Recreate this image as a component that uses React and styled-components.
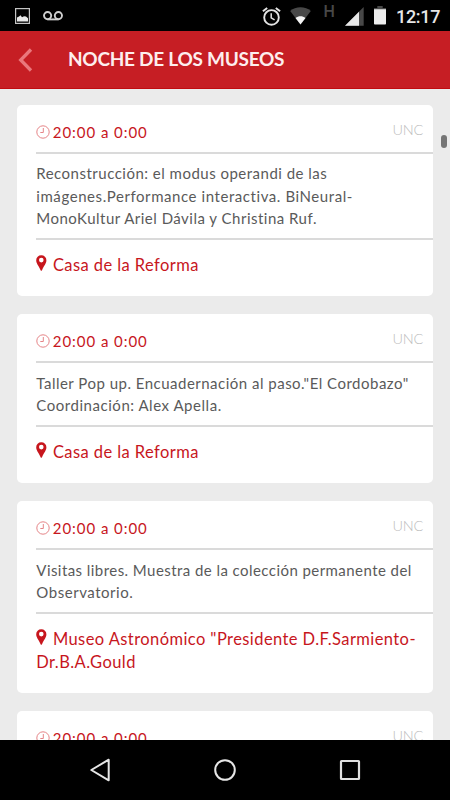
import React from "react";
import styled, {createGlobalStyle} from "styled-components";

const GlobalStyle = createGlobalStyle`
  * {
    box-sizing: border-box;
  }

  body {
    margin: 0;
    background-color: #000000;
  }
`;

const Screen = styled.div`
  width: 450px;
  height: 800px;
  display: flex;
  flex-direction: column;
  overflow: hidden;
  background-color: #ebebeb;
  font-family: Lato, "Liberation Sans", sans-serif;
`;

const StatusBar = styled.div`
  height: 31px;
  flex: none;
  display: flex;
  align-items: flex-start;
  justify-content: space-between;
  padding: 0 10px 0 15px;
  background-color: #000000;

  svg {
    display: block;
  }
`;

const StatusGroup = styled.div`
  display: flex;
  align-items: flex-start;
`;

const StatusItem = styled.div`
  margin-left: ${props => props.$left || 0}px;
  padding-top: ${props => props.$top || 0}px;
`;

const Network = styled.span`
  display: block;
  width: 11px;
  margin: 2px 0 0 13px;
  color: #484848;
  font: 500 16px/20px Roboto, sans-serif;
`;

const Clock = styled.span`
  display: block;
  width: 44px;
  margin: 6px 0 0 10px;
  color: #e6e6e6;
  font: 500 18px/22px Roboto, sans-serif;
  letter-spacing: -0.3px;
  white-space: nowrap;
`;

const Header = styled.header`
  height: 58px;
  flex: none;
  display: flex;
  align-items: center;
  padding: 0 18px 0 18px;
  background-color: #c61e24;
  border-bottom: 1px solid #c00c10;
`;

const Title = styled.h1`
  margin: -1px 0 0 34px;
  color: #fdeeee;
  font-size: 19px;
  font-weight: 700;
  line-height: 24px;
  letter-spacing: -0.27px;
  white-space: nowrap;
`;

const List = styled.main`
  position: relative;
  flex: 1;
  min-height: 0;
  overflow: hidden;
  display: flex;
  flex-direction: column;
  gap: 17.7px;
  padding: 15.6px 17px 0 17.3px;
`;

const ScrollThumb = styled.div`
  position: absolute;
  top: 46px;
  right: 3px;
  width: 6px;
  height: 13px;
  border-radius: 3px;
  background-color: #757575;
`;

const Card = styled.article`
  flex: none;
  padding-left: 19px;
  background-color: #ffffff;
  border-radius: 5px;
`;

const CardHead = styled.div`
  height: 49.1px;
  display: flex;
  justify-content: space-between;
  padding-right: 10px;
  border-bottom: 2px solid #dadada;
`;

const Schedule = styled.div`
  display: flex;
  align-items: flex-start;
  padding-top: 17px;
  color: #c7161d;
  font-size: 15px;
  line-height: 20px;
  letter-spacing: 0.95px;

  svg {
    margin: 3px 3px 0 -0.5px;
  }
`;

const Owner = styled.span`
  padding-top: 15px;
  color: #bcbcbc;
  font-size: 14.5px;
  font-weight: 300;
  line-height: 20px;
  letter-spacing: -0.3px;
`;

const Description = styled.p`
  margin: 0;
  padding: 8.8px 0 8.5px;
  border-bottom: 2px solid #dadada;
  color: #5a5a5a;
  font-size: 15px;
  line-height: 22.4px;
`;

const Line = styled.span`
  display: block;
  letter-spacing: ${props => props.$spacing || 0.5}px;
  white-space: nowrap;
`;

const Place = styled.div`
  padding: 14px 0 18.6px;
  color: #c7161d;
  font-size: 16.5px;
  line-height: 23.4px;
  letter-spacing: 0.42px;
  white-space: pre-line;

  svg {
    margin-right: 5.6px;
    vertical-align: 0;
  }
`;

const NavBar = styled.nav`
  height: 60px;
  flex: none;
  display: flex;
  align-items: center;
  justify-content: space-between;
  padding: 0 88px;
  background-color: #000000;
`;

const PictureIcon = () => (
    <svg width="15" height="16" viewBox="0 0 15 16">
        <rect x="0.6" y="0.6" width="13.8" height="14.8" fill="none" stroke="#c4c4c4" strokeWidth="1.2"/>
        <path d="M2 13.5V9.5l2-1 1.5-1.2 1.5 2 2-1 2 .3 2 1.6v3.3z" fill="#e8e8e8"/>
    </svg>
);

const VoicemailIcon = () => (
    <svg width="20" height="10" viewBox="0 0 20 10" fill="none" stroke="#cfcfcf" strokeWidth="1.9">
        <circle cx="4.6" cy="4.6" r="3.6"/>
        <circle cx="15.4" cy="4.6" r="3.6"/>
        <path d="M4.6 8.4h10.8"/>
    </svg>
);

const AlarmIcon = () => (
    <svg width="19" height="19" viewBox="0 0 19 19" fill="none" stroke="#e4e4e4">
        <circle cx="9.5" cy="10.4" r="7.3" strokeWidth="1.9"/>
        <path d="M9.2 6.3v4.6l3.4 2" strokeWidth="1.5"/>
        <path d="M.9 4.3l4.3-3.4M18.1 4.3L13.8.9" strokeWidth="1.9"/>
    </svg>
);

const WifiIcon = () => (
    <svg width="21" height="18" viewBox="0 0 21 18">
        <path d="M10.5 17.6L.2 4C3 1.6 6.5.3 10.5.3S18 1.6 20.8 4z" fill="#484848"/>
        <path d="M10.5 17.6L5.5 10.9c3-2.2 7-2.2 10 0z" fill="#f4f4f4"/>
    </svg>
);

const SignalIcon = () => (
    <svg width="19" height="19" viewBox="0 0 19 19">
        <path d="M0 18.7L18.7 0v18.7z" fill="#484848"/>
        <path d="M0 18.7L14 4.7v14z" fill="#e8e8e8"/>
    </svg>
);

const BatteryIcon = () => (
    <svg width="12" height="19" viewBox="0 0 12 19">
        <path d="M0 2h3.3V0h5.4v2H12v2H0z" fill="#484848"/>
        <path d="M0 3.3h12v14.4a.8.8 0 0 1-.8.8H.8a.8.8 0 0 1-.8-.8z" fill="#ededed"/>
    </svg>
);

const BackIcon = () => (
    <svg width="16" height="24" viewBox="0 0 16 24">
        <path d="M13 1.5L2.7 12 13 22.5" fill="none" stroke="#ea777c" strokeWidth="3.3"/>
    </svg>
);

const ClockIcon = () => (
    <svg width="14" height="14" viewBox="0 0 14 14" fill="none" stroke="#e58487">
        <circle cx="7" cy="7" r="6.2"/>
        <path d="M7.3 3v4.5H4.3"/>
    </svg>
);

const PinIcon = () => (
    <svg width="11" height="16" viewBox="0 0 11 16">
        <path
            d="M5.3.2A5 5 0 0 0 .2 5.3C.2 8.5 2.5 10.5 4.6 15.200q.7 1.200 1.400 0C8.100 10.500 10.400 8.500 10.400 5.300A5 5 0 0 0 5.300.2zm0 2.600a2.300 2.300 0 1 1 0 4.600 2.300 2.300 0 0 1 0-4.600z"
            fill="#c7161d"
            fillRule="evenodd"
        />
    </svg>
);

const events = [
    {
        id: 1,
        time: "20:00 a 0:00",
        owner: "UNC",
        lines: [
            {text: "Reconstrucción: el modus operandi de las", spacing: 0.49},
            {text: "imágenes.Performance interactiva. BiNeural-", spacing: 0.57},
            {text: "MonoKultur Ariel Dávila y Christina Ruf.", spacing: 0.49},
        ],
        place: "Casa de la Reforma",
    },
    {
        id: 2,
        time: "20:00 a 0:00",
        owner: "UNC",
        lines: [
            {text: "Taller Pop up. Encuadernación al paso.\"El Cordobazo\"", spacing: 0.49},
            {text: "Coordinación: Alex Apella.", spacing: 0.54},
        ],
        place: "Casa de la Reforma",
    },
    {
        id: 3,
        time: "20:00 a 0:00",
        owner: "UNC",
        lines: [
            {text: "Visitas libres. Muestra de la colección permanente del", spacing: 0.44},
            {text: "Observatorio.", spacing: 0.54},
        ],
        place: "Museo Astronómico \"Presidente D.F.Sarmiento-\nDr.B.A.Gould",
    },
    {
        id: 4,
        time: "20:00 a 0:00",
        owner: "UNC",
    },
];

const EventCard = ({event}) => (
    <Card>
        <CardHead>
            <Schedule><ClockIcon/>{event.time}</Schedule>
            <Owner>{event.owner}</Owner>
        </CardHead>
        {event.lines && <Description>
            {event.lines.map(line => <Line key={line.text} $spacing={line.spacing}>{line.text}</Line>)}
        </Description>}
        {event.place && <Place><PinIcon/>{event.place}</Place>}
    </Card>
);

export default function App() {
    return (
        <>
            <GlobalStyle/>
            <Screen>
                <StatusBar>
                    <StatusGroup>
                        <StatusItem $top={8}><PictureIcon/></StatusItem>
                        <StatusItem $left={12.5} $top={10.5}><VoicemailIcon/></StatusItem>
                    </StatusGroup>
                    <StatusGroup>
                        <StatusItem $top={6.5}><AlarmIcon/></StatusItem>
                        <StatusItem $left={8.5} $top={7}><WifiIcon/></StatusItem>
                        <Network>H</Network>
                        <StatusItem $left={10.5} $top={7}><SignalIcon/></StatusItem>
                        <StatusItem $left={10} $top={6}><BatteryIcon/></StatusItem>
                        <Clock>12:17</Clock>
                    </StatusGroup>
                </StatusBar>
                <Header>
                    <BackIcon/>
                    <Title>NOCHE DE LOS MUSEOS</Title>
                </Header>
                <List>
                    {events.map(event => <EventCard key={event.id} event={event}/>)}
                    <ScrollThumb/>
                </List>
                <NavBar>
                    <svg width="24" height="26" viewBox="0 0 24 26">
                        <path d="M20.7 2.7v20.6L3.3 13z" fill="none" stroke="#e6e6e6" strokeWidth="2" strokeLinejoin="round"/>
                    </svg>
                    <svg width="24" height="24" viewBox="0 0 24 24">
                        <circle cx="12" cy="12" r="9.8" fill="none" stroke="#e6e6e6" strokeWidth="2"/>
                    </svg>
                    <svg width="24" height="24" viewBox="0 0 24 24">
                        <rect x="3" y="3" width="18" height="18" rx="0.5" fill="none" stroke="#e0e0e0" strokeWidth="2.2"/>
                    </svg>
                </NavBar>
            </Screen>
        </>
    );
}
